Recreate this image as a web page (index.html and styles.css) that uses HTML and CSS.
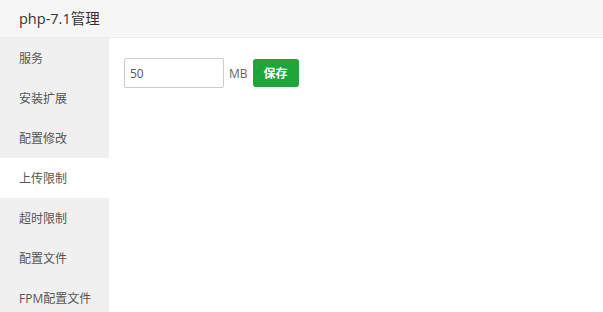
FILE: index.html
```html
<!DOCTYPE html>
<html lang="zh-CN">
<head>
    <meta charset="UTF-8">
    <title>php-7.1管理</title>
    <link rel="stylesheet" href="styles.css">
</head>
<body>
    <!-- Window title -->
    <header class="title-bar">php-7.1管理</header>

    <div class="panel">
        <!-- Left menu -->
        <ul class="side-menu">
            <li>服务</li>
            <li>安装扩展</li>
            <li>配置修改</li>
            <li class="active">上传限制</li>
            <li>超时限制</li>
            <li>配置文件</li>
            <li>FPM配置文件</li>
        </ul>

        <!-- Upload limit form -->
        <div class="content">
            <div class="limit-row">
                <input class="limit-input" type="text" value="50">
                <span class="unit">MB</span>
                <button class="btn-save">保存</button>
            </div>
        </div>
    </div>
</body>
</html>
```

FILE: styles.css
```css
body {
    margin: 0;
    font-family: "Open Sans", "Noto Sans CJK SC", sans-serif;
    color: #333;
    background: #fff;
    height: 312px;
    overflow: hidden;
}

/* Title bar */
.title-bar {
    height: 37px;
    line-height: 37px;
    padding-left: 19px;
    background-color: #f6f6f6;
    border-bottom: 1px solid #eee;
    font-size: 14.5px;
    color: #333;
}

.panel {
    display: flex;
}

/* Side menu */
.side-menu {
    list-style: none;
    margin: 0;
    padding: 0;
    width: 109px;
    background-color: #f0f0f0;
}

.side-menu li {
    height: 40px;
    line-height: 41px;
    padding-left: 19px;
    font-size: 12px;
    color: #555;
}

.side-menu li.active {
    background-color: #fff;
}

/* Content area */
.content {
    flex: 1;
    padding: 20px 15px;
}

.limit-row {
    display: flex;
    align-items: center;
}

.limit-input {
    box-sizing: border-box;
    width: 100px;
    height: 30px;
    padding: 0 5px;
    border: 1px solid #ccc;
    border-radius: 2px;
    font-family: inherit;
    font-size: 12px;
    color: #555;
    outline: none;
}

.unit {
    margin: 0 5px 0 5px;
    font-size: 12px;
    color: #666;
}

.btn-save {
    height: 28px;
    padding: 0 11px;
    border: none;
    border-radius: 3px;
    background-color: #20a53a;
    color: #fff;
    font-family: inherit;
    font-size: 12px;
    font-weight: bold;
    cursor: pointer;
}
```
